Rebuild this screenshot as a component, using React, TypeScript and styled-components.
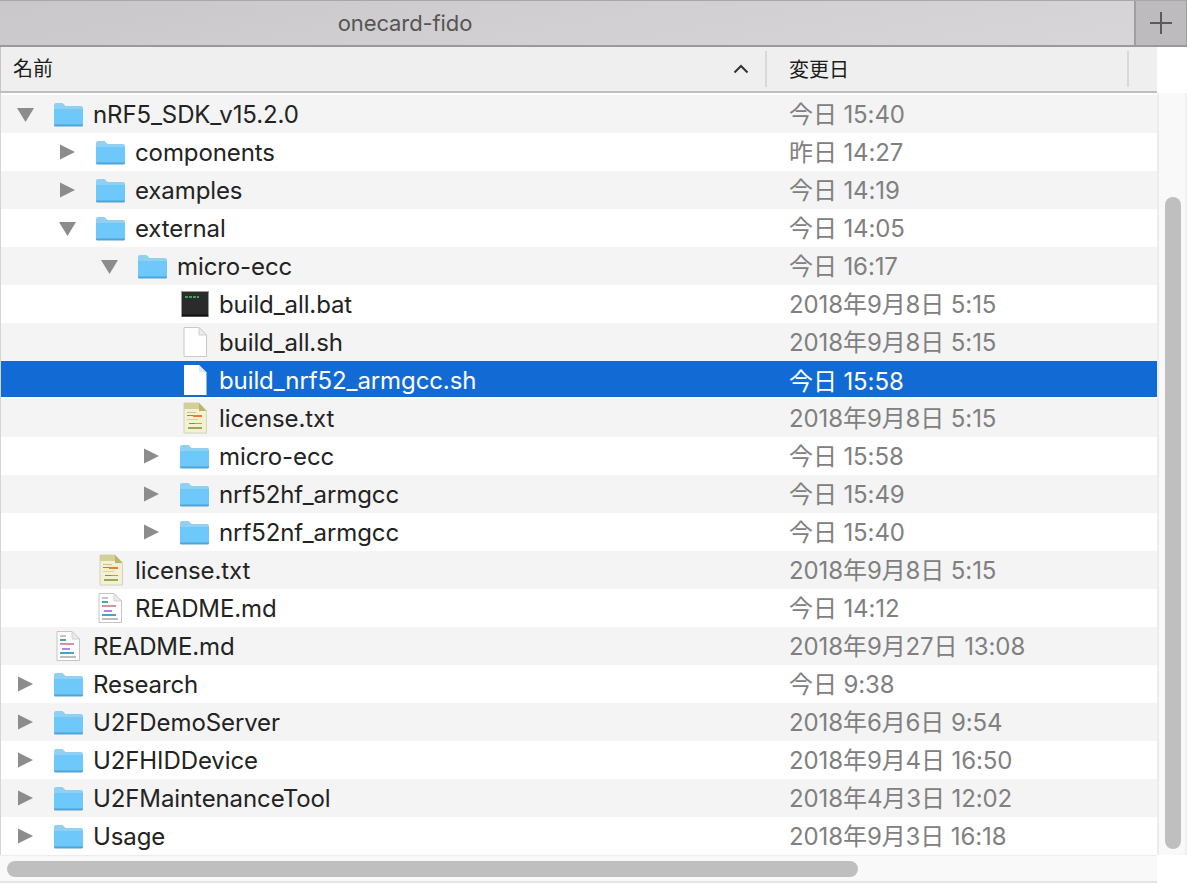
import React from 'react';
import styled, { createGlobalStyle } from 'styled-components';

const GlobalStyle = createGlobalStyle`
  html, body {
    margin: 0;
    padding: 0;
    background: #fff;
  }
`;

const Window = styled.div`
  width: 1187px;
  height: 885px;
  overflow: hidden;
  font-family: Inter, "Liberation Sans", "Noto Sans CJK JP", sans-serif;
  font-size: 24px;
  letter-spacing: -0.1px;
  color: #232323;
`;

const TitleBar = styled.div`
  display: flex;
  height: 47px;
  box-sizing: border-box;
  border-top: 1px solid #a9a7a9;
  border-bottom: 2px solid #9b999b;
  background: linear-gradient(170deg, #c9c7c9 0%, #d3d1d3 60%, #d8d6d8 100%);
`;

const Title = styled.div`
  flex: 1;
  text-align: center;
  line-height: 44px;
  font-size: 22px;
  color: #555;
`;

const TitleText = styled.span`
  margin-right: 324px;
`;

const AddTab = styled.div`
  width: 53px;
  box-sizing: border-box;
  border-left: 2px solid #a09ea0;
  border-right: 1px solid #a09ea0;
  background: #bdbbbd;
  display: flex;
  align-items: center;
  justify-content: center;
`;

const HeaderRow = styled.div`
  width: 1157px;
  height: 46px;
  box-sizing: border-box;
  border-bottom: 2px solid #bdbdbd;
  border-left: 1px solid #c4c4c4;
  background: #efefef;
  display: flex;
  font-size: 20px;
  line-height: 46px;
  letter-spacing: 0;
  color: #1c1c1c;
`;

const NameHeader = styled.div`
  width: 764px;
  box-sizing: border-box;
  padding: 0 16px 0 12px;
  display: flex;
  align-items: center;
  justify-content: space-between;
`;

const DateHeader = styled.div`
  width: 360px;
  box-sizing: border-box;
  padding-left: 22px;
`;

const HeaderDivider = styled.div`
  width: 2px;
  height: 36px;
  margin-top: 4px;
  background: #d8d8d8;
`;

const Body = styled.div`
  display: flex;
  height: 792px;
`;

const Main = styled.div`
  width: 1157px;
`;

const List = styled.div`
  padding-top: 2px;
  box-sizing: border-box;
  border-left: 1px solid #d4d4d4;
`;

const Row = styled.div<{ $odd: boolean; $selected: boolean }>`
  height: 38px;
  display: flex;
  align-items: center;
  background: ${(p) => (p.$selected ? '#126bd5' : p.$odd ? '#fff' : '#f4f4f4')};
  color: ${(p) => (p.$selected ? '#fff' : 'inherit')};
  ${(p) => (p.$selected ? 'box-shadow: inset 0 -2px 0 #fff;' : '')}
`;

const NameCell = styled.div<{ $level: number }>`
  width: 788px;
  box-sizing: border-box;
  padding-left: ${(p) => p.$level * 42 + 15}px;
  display: flex;
  align-items: center;
`;

const Disclosure = styled.div`
  width: 37px;
  height: 24px;
  display: flex;
  align-items: center;
`;

const IconSlot = styled.div`
  width: 40px;
  height: 32px;
  display: flex;
  align-items: center;
`;

const DateCell = styled.div<{ $selected: boolean }>`
  color: ${(p) => (p.$selected ? '#fff' : '#808080')};
  padding-bottom: ${(p) => (p.$selected ? 2 : 4)}px;
`;

const HScroll = styled.div`
  height: 28px;
  box-sizing: border-box;
  border-top: 1px solid #ececec;
  border-bottom: 2px solid #e4e4e4;
  background: #f9f9f9;
  padding: 5px 0 0 7px;
`;

const HThumb = styled.div`
  width: 851px;
  height: 16px;
  border-radius: 8px;
  background: #bfbfbf;
`;

const VScroll = styled.div`
  width: 30px;
  height: 762px;
  box-sizing: border-box;
  border-left: 2px solid #ececec;
  border-right: 2px solid #f0f0f0;
  background: #f9f9f9;
  padding: 104px 0 0 6px;
`;

const VThumb = styled.div`
  width: 16px;
  height: 652px;
  border-radius: 8px;
  background: #bfbfbf;
`;

type Kind = 'folder' | 'blank' | 'term' | 'text' | 'md';

interface Item {
  name: string;
  date: string;
  level: number;
  kind: Kind;
  open?: boolean;
  selected?: boolean;
}

const items: Item[] = [
  { name: 'nRF5_SDK_v15.2.0', date: '今日 15:40', level: 0, kind: 'folder', open: true },
  { name: 'components', date: '昨日 14:27', level: 1, kind: 'folder' },
  { name: 'examples', date: '今日 14:19', level: 1, kind: 'folder' },
  { name: 'external', date: '今日 14:05', level: 1, kind: 'folder', open: true },
  { name: 'micro-ecc', date: '今日 16:17', level: 2, kind: 'folder', open: true },
  { name: 'build_all.bat', date: '2018年9月8日 5:15', level: 3, kind: 'term' },
  { name: 'build_all.sh', date: '2018年9月8日 5:15', level: 3, kind: 'blank' },
  { name: 'build_nrf52_armgcc.sh', date: '今日 15:58', level: 3, kind: 'blank', selected: true },
  { name: 'license.txt', date: '2018年9月8日 5:15', level: 3, kind: 'text' },
  { name: 'micro-ecc', date: '今日 15:58', level: 3, kind: 'folder' },
  { name: 'nrf52hf_armgcc', date: '今日 15:49', level: 3, kind: 'folder' },
  { name: 'nrf52nf_armgcc', date: '今日 15:40', level: 3, kind: 'folder' },
  { name: 'license.txt', date: '2018年9月8日 5:15', level: 1, kind: 'text' },
  { name: 'README.md', date: '今日 14:12', level: 1, kind: 'md' },
  { name: 'README.md', date: '2018年9月27日 13:08', level: 0, kind: 'md' },
  { name: 'Research', date: '今日 9:38', level: 0, kind: 'folder' },
  { name: 'U2FDemoServer', date: '2018年6月6日 9:54', level: 0, kind: 'folder' },
  { name: 'U2FHIDDevice', date: '2018年9月4日 16:50', level: 0, kind: 'folder' },
  { name: 'U2FMaintenanceTool', date: '2018年4月3日 12:02', level: 0, kind: 'folder' },
  { name: 'Usage', date: '2018年9月3日 16:18', level: 0, kind: 'folder' },
];

const Arrow = ({ open }: { open?: boolean }) =>
  open ? (
    <svg width="20" height="16" viewBox="0 0 20 16">
      <path d="M1 2h17l-8.500 14z" fill="#8c8c8c" />
    </svg>
  ) : (
    <svg width="20" height="18" viewBox="0 0 20 18">
      <path d="M2 1.500l15 7.500-15 7.500z" fill="#8c8c8c" />
    </svg>
  );

const FolderIcon = () => (
  <svg width="31" height="26" viewBox="0 0 31 26">
    <path d="M1 4a2 2 0 0 1 2-2h6.500l3 3H28a2 2 0 0 1 2 2v16a2 2 0 0 1-2 2H3a2 2 0 0 1-2-2z" fill="#8fd0f3" />
    <path d="M1 8h29v15a2 2 0 0 1-2 2H3a2 2 0 0 1-2-2z" fill="#6fc8fa" />
    <path d="M1 23.500h29v.5a1.500 1.500 0 0 1-1.500 1.500h-26A1.500 1.500 0 0 1 1 24z" fill="#4fa3d6" />
  </svg>
);

const BlankIcon = () => (
  <svg width="30" height="32" viewBox="-4 0 30 32">
    <path d="M1 1.500h15l7.500 7.500v21.500H1z" fill="#fff" stroke="#c9c9c9" strokeWidth="1" />
    <path d="M16 1.500V9h7.500z" fill="#ececec" stroke="#d0d0d0" strokeWidth="1" />
  </svg>
);

const SelectedFileIcon = () => (
  <svg width="30" height="32" viewBox="-4 0 30 32">
    <path d="M1 1h15l7.500 7.500V31H1z" fill="#fff" />
    <path d="M16 1v7.500h7.500z" fill="#dfe8f5" />
  </svg>
);

const TerminalIcon = () => (
  <svg width="30" height="26" viewBox="-2 0 30 26">
    <rect x="0.500" y="0.500" width="27" height="25" fill="#2a2b2a" stroke="#9a9a9a" />
    <rect x="1" y="23.500" width="26" height="2" fill="#111" />
    <rect x="4" y="5" width="3" height="2" fill="#3fa45b" />
    <rect x="8" y="5" width="3" height="2" fill="#3fa45b" />
    <rect x="12" y="5" width="3" height="2" fill="#3fa45b" />
    <rect x="16" y="5" width="2" height="2" fill="#3fa45b" />
  </svg>
);

const TextIcon = () => (
  <svg width="30" height="32" viewBox="-4 0 30 32">
    <path d="M1 1h15l7.500 8v22H1z" fill="#f4f1d2" stroke="#d4d2c0" />
    <path d="M16 1v8h7.500z" fill="#b9b36b" />
    <path d="M1 1h15v6H1z" fill="#d3cf98" />
    <rect x="4" y="10" width="9" height="1" fill="#c7c48e" />
    <rect x="4" y="13" width="6" height="1" fill="#8f8d4a" />
    <rect x="10" y="13" width="9" height="2" fill="#ef7a32" />
    <rect x="4" y="17" width="11" height="1" fill="#d6d3a0" />
    <rect x="6" y="21" width="6" height="1" fill="#6d9c3e" />
    <rect x="12" y="21" width="7" height="1" fill="#ef8a3a" />
    <rect x="5" y="25" width="14" height="2" fill="#9aa658" />
  </svg>
);

const MdIcon = () => (
  <svg width="29" height="32" viewBox="-3 0 29 32">
    <path d="M1 1.500h15l7.500 7.500v21.500H1z" fill="#fff" stroke="#c4c4c4" />
    <path d="M16 1.500V9h7.500z" fill="#ececec" stroke="#d0d0d0" />
    <rect x="4" y="5" width="6" height="2" fill="#c4c4c4" />
    <rect x="4" y="9" width="6" height="2" fill="#47a6b3" />
    <rect x="4" y="13" width="14" height="2" fill="#d8919f" />
    <rect x="6" y="18" width="8" height="2" fill="#a78be8" />
    <rect x="4" y="22" width="14" height="2" fill="#47a6b3" />
    <rect x="4" y="26" width="16" height="2" fill="#bdbdbd" />
  </svg>
);

const ItemIcon = ({ item }: { item: Item }) => {
  if (item.kind === 'folder') return <FolderIcon />;
  if (item.kind === 'term') return <TerminalIcon />;
  if (item.kind === 'text') return <TextIcon />;
  if (item.kind === 'md') return <MdIcon />;
  return item.selected ? <SelectedFileIcon /> : <BlankIcon />;
};

const App = () => {
  return (
    <Window>
      <GlobalStyle />
      <TitleBar>
        <Title>
          <TitleText>onecard-fido</TitleText>
        </Title>
        <AddTab>
          <svg width="24" height="24" viewBox="0 0 24 24">
            <path d="M1 12h22M12 1v22" stroke="#5a5a5a" strokeWidth="2" />
          </svg>
        </AddTab>
      </TitleBar>
      <HeaderRow>
        <NameHeader>
          名前
          <svg width="16" height="10" viewBox="0 0 16 10">
            <path d="M1.500 8.500L8 2l6.500 6.500" fill="none" stroke="#333" strokeWidth="2" />
          </svg>
        </NameHeader>
        <HeaderDivider />
        <DateHeader>変更日</DateHeader>
        <HeaderDivider />
      </HeaderRow>
      <Body>
        <Main>
          <List>
            {items.map((item, index) => (
              <Row key={index} $odd={index % 2 === 1} $selected={!!item.selected}>
                <NameCell $level={item.level}>
                  <Disclosure>
                    {item.kind === 'folder' && <Arrow open={item.open} />}
                  </Disclosure>
                  <IconSlot>
                    <ItemIcon item={item} />
                  </IconSlot>
                  {item.name}
                </NameCell>
                <DateCell $selected={!!item.selected}>{item.date}</DateCell>
              </Row>
            ))}
          </List>
          <HScroll>
            <HThumb />
          </HScroll>
        </Main>
        <VScroll>
          <VThumb />
        </VScroll>
      </Body>
    </Window>
  );
};

export default App;
